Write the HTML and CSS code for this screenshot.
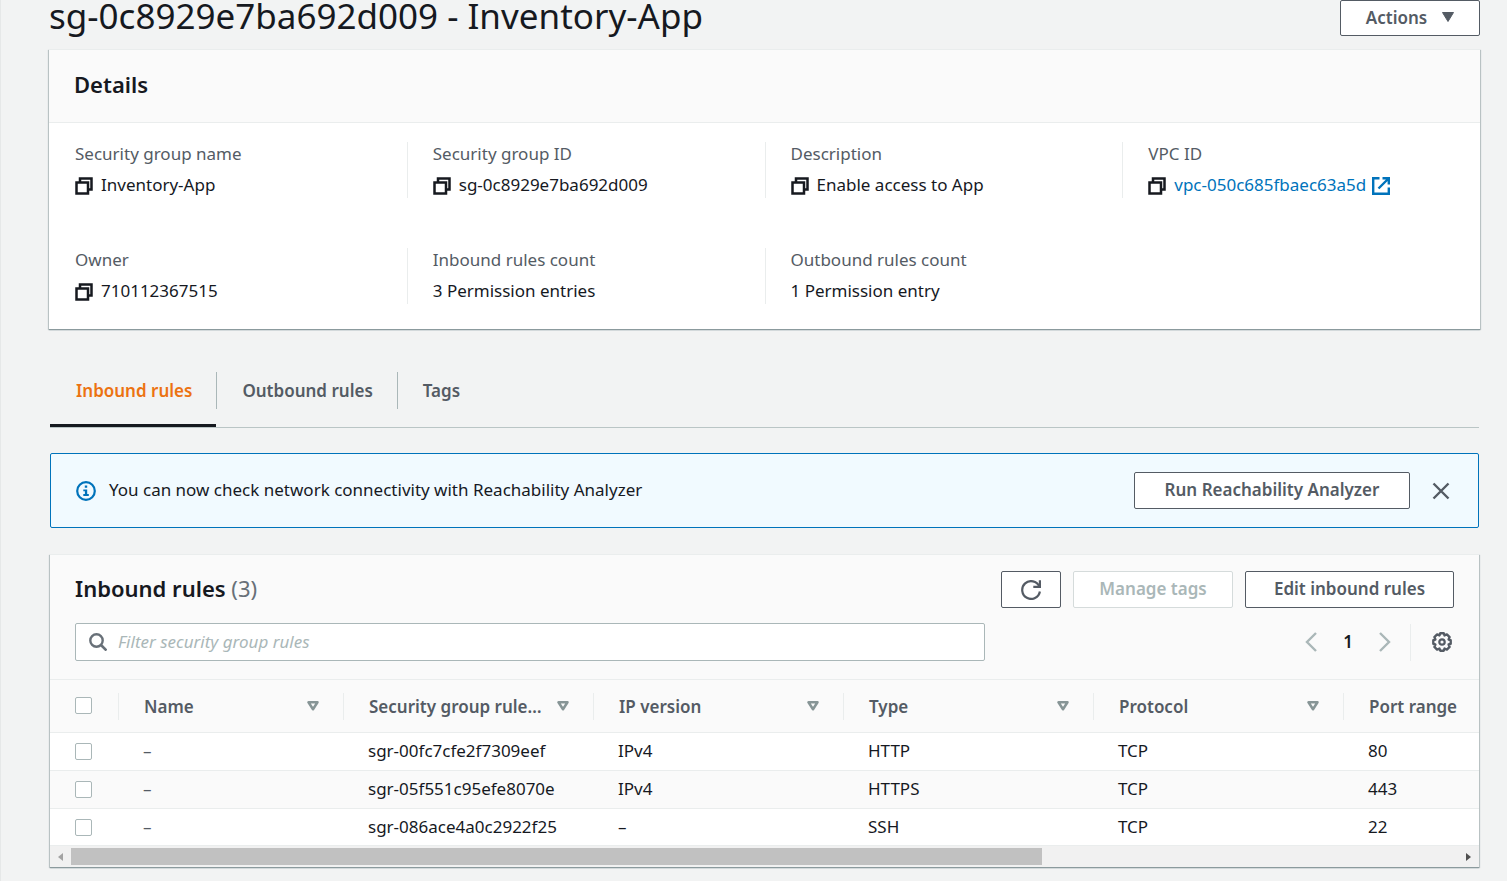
FILE: index.html
```
<!DOCTYPE html>
<html lang="en">
<head>
<meta charset="utf-8">
<title>sg-0c8929e7ba692d009 - Inventory-App</title>
<link rel="stylesheet" href="styles.css">
</head>
<body>
<svg class="defs" aria-hidden="true">
  <symbol id="copy" viewBox="0 0 18 18"><path d="M5 5V1.500H16.500V12.500H13M1.500 5.500H13V16.500H1.500Z" fill="none" stroke="currentColor" stroke-width="2.500"/></symbol>
  <symbol id="sort" viewBox="0 0 12 10"><path d="M1.500 1.300H10.500L6 8.300Z" fill="none" stroke="currentColor" stroke-width="2.500" stroke-linejoin="round"/></symbol>
</svg>
<main class="page">
  <header class="page-head">
    <h1>sg-0c8929e7ba692d009 - Inventory-App</h1>
    <button class="btn btn-actions" type="button">Actions <svg class="caret" viewBox="0 0 12 10"><path d="M.5.500H11.500L6 9.500Z" fill="currentColor" stroke="currentColor" stroke-linejoin="round"/></svg></button>
  </header>

  <section class="card">
    <div class="card-head"><h2>Details</h2></div>
    <dl class="details">
      <div class="detail"><dt>Security group name</dt><dd><svg class="icon"><use href="#copy"/></svg>Inventory-App</dd></div>
      <div class="detail"><dt>Security group ID</dt><dd><svg class="icon"><use href="#copy"/></svg>sg-0c8929e7ba692d009</dd></div>
      <div class="detail"><dt>Description</dt><dd><svg class="icon"><use href="#copy"/></svg>Enable access to App</dd></div>
      <div class="detail"><dt>VPC ID</dt><dd><svg class="icon"><use href="#copy"/></svg><a class="link" href="#vpc">vpc-050c685fbaec63a5d<svg class="icon icon-ext" viewBox="0 0 18 18"><path d="M7.500 1.200H1.200V16.800H16.800V10.500M10.500 1.200H16.800V7.500M16.500 1.500L6.500 11.500" fill="none" stroke="currentColor" stroke-width="2.400"/></svg></a></dd></div>
      <div class="detail"><dt>Owner</dt><dd><svg class="icon"><use href="#copy"/></svg>710112367515</dd></div>
      <div class="detail"><dt>Inbound rules count</dt><dd>3 Permission entries</dd></div>
      <div class="detail"><dt>Outbound rules count</dt><dd>1 Permission entry</dd></div>
    </dl>
  </section>

  <div class="lower">
    <div class="tabs" role="tablist">
      <button class="tab tab-active" type="button" role="tab" aria-selected="true"><span>Inbound rules</span></button>
      <button class="tab" type="button" role="tab"><span>Outbound rules</span></button>
      <button class="tab" type="button" role="tab"><span>Tags</span></button>
    </div>

    <div class="notice" role="status">
      <svg class="icon-lg info" viewBox="0 0 20 20"><circle cx="10" cy="10" r="8.800" fill="none" stroke="currentColor" stroke-width="2.200"/><path d="M8.800 4.500H11.200V6.800H8.800ZM7.300 8.400H11.200V13H12.800V15H7.300V13H8.900V10.300H7.300Z" fill="currentColor"/></svg>
      <p>You can now check network connectivity with Reachability Analyzer</p>
      <button class="btn btn-run" type="button">Run Reachability Analyzer</button>
      <button class="plain" type="button" aria-label="Dismiss"><svg class="icon" viewBox="0 0 18 18"><path d="M1.500 1.500L16.500 16.500M16.500 1.500L1.500 16.500" fill="none" stroke="currentColor" stroke-width="2.400"/></svg></button>
    </div>

    <section class="card rules">
      <div class="rules-head">
        <div class="rules-title">
          <h2>Inbound rules <span class="count">(3)</span></h2>
          <button class="btn btn-refresh" type="button" aria-label="Refresh"><svg class="icon-lg" viewBox="0 0 20 20"><path d="M18.300 6.500A8.900 8.900 0 1 0 18.900 11.500" fill="none" stroke="currentColor" stroke-width="2.200"/><path d="M18.900 .3V6.800H12.300" fill="none" stroke="currentColor" stroke-width="2.200"/></svg></button>
          <button class="btn btn-tags" type="button" disabled>Manage tags</button>
          <button class="btn btn-edit" type="button">Edit inbound rules</button>
        </div>
        <div class="rules-tools">
          <label class="search"><svg class="icon" viewBox="0 0 18 18"><circle cx="7.500" cy="7.500" r="6.200" fill="none" stroke="currentColor" stroke-width="2.400"/><path d="M12 12L17.500 17.500" stroke="currentColor" stroke-width="2.600"/></svg><input type="text" placeholder="Filter security group rules" aria-label="Filter security group rules"></label>
          <nav class="pager" aria-label="Pages">
            <button class="plain arrow" type="button" aria-label="Previous page"><svg class="chev" viewBox="0 0 12 20"><path d="M11 1L2 10L11 19" fill="none" stroke="currentColor" stroke-width="2.400"/></svg></button>
            <button class="plain current" type="button">1</button>
            <button class="plain arrow" type="button" aria-label="Next page"><svg class="chev" viewBox="0 0 12 20"><path d="M1 1L10 10L1 19" fill="none" stroke="currentColor" stroke-width="2.400"/></svg></button>
          </nav>
          <button class="plain gear" type="button" aria-label="Preferences"><svg class="icon-lg" viewBox="0 0 20 20"><path d="M8.200 1.300H11.800L12.500 3.400L14.900 2.400L17.600 5.100L16.600 7.500L18.700 8.200V11.800L16.600 12.500L17.600 14.900L14.900 17.600L12.500 16.600L11.800 18.700H8.200L7.500 16.600L5.100 17.600L2.400 14.900L3.400 12.500L1.300 11.800V8.200L3.400 7.500L2.400 5.100L5.100 2.400L7.500 3.400Z" fill="none" stroke="currentColor" stroke-width="2.400" stroke-linejoin="round"/><circle cx="10" cy="10" r="2.700" fill="none" stroke="currentColor" stroke-width="2.200"/></svg></button>
        </div>
      </div>
      <div class="table-wrap">
        <table>
          <colgroup><col class="c-check"><col class="c-name"><col class="c-wide"><col class="c-wide"><col class="c-wide"><col class="c-wide"><col class="c-wide"></colgroup>
          <thead><tr>
            <th><input type="checkbox" aria-label="Select all rules"></th>
            <th><div class="th"><span>Name</span><svg class="sort"><use href="#sort"/></svg></div></th>
            <th><div class="th"><span>Security group rule…</span><svg class="sort"><use href="#sort"/></svg></div></th>
            <th><div class="th"><span>IP version</span><svg class="sort"><use href="#sort"/></svg></div></th>
            <th><div class="th"><span>Type</span><svg class="sort"><use href="#sort"/></svg></div></th>
            <th><div class="th"><span>Protocol</span><svg class="sort"><use href="#sort"/></svg></div></th>
            <th><div class="th"><span>Port range</span></div></th>
          </tr></thead>
          <tbody>
            <tr><td><input type="checkbox" aria-label="Select sgr-00fc7cfe2f7309eef"></td><td>–</td><td>sgr-00fc7cfe2f7309eef</td><td>IPv4</td><td>HTTP</td><td>TCP</td><td>80</td></tr>
            <tr><td><input type="checkbox" aria-label="Select sgr-05f551c95efe8070e"></td><td>–</td><td>sgr-05f551c95efe8070e</td><td>IPv4</td><td>HTTPS</td><td>TCP</td><td>443</td></tr>
            <tr><td><input type="checkbox" aria-label="Select sgr-086ace4a0c2922f25"></td><td>–</td><td>sgr-086ace4a0c2922f25</td><td>–</td><td>SSH</td><td>TCP</td><td>22</td></tr>
          </tbody>
        </table>
      </div>
      <div class="scrollbar" aria-hidden="true">
        <svg class="sb-arrow" viewBox="0 0 20 20"><path d="M13 6V14L8 10Z" fill="#a3a3a3"/></svg>
        <div class="sb-track"><div class="sb-thumb"></div></div>
        <svg class="sb-arrow" viewBox="0 0 20 20"><path d="M7 6V14L12 10Z" fill="#505050"/></svg>
      </div>
    </section>
  </div>
</main>
</body>
</html>
```
FILE: styles.css
```
* { box-sizing: border-box; }
body {
  margin: 0;
  background: #f2f3f3;
  color: #16191f;
  font: 17px/23px "Noto Sans", "Open Sans", sans-serif;
}
h1, h2, p, dl, dd { margin: 0; }
button, input { font: inherit; color: inherit; }
svg { display: block; flex: none; }
.defs { position: absolute; width: 0; height: 0; }
.page {
  min-height: 100vh;
  padding: 0 27px 13px 48px;
  border-left: 1px solid #e6e8e8;
}
.page-head {
  display: flex;
  justify-content: space-between;
  align-items: flex-start;
  padding-bottom: 13px;
}
h1 { font-size: 35px; line-height: 32px; font-weight: 400; }
h2 { font-size: 22px; line-height: 28px; font-weight: 600; }
.btn {
  display: flex;
  align-items: center;
  justify-content: center;
  gap: 15px;
  height: 37px;
  padding: 0 10px 2px;
  border: 1px solid #545b64;
  border-radius: 2px;
  background: #fff;
  color: #545b64;
  font-weight: 600;
  white-space: nowrap;
}
.btn:disabled { border-color: #d5dbdb; color: #aab7b8; }
.btn-actions { min-width: 140px; height: 36px; }
.btn-run { min-width: 276px; }
.btn-refresh { min-width: 60px; padding-bottom: 0; }
.btn-tags { min-width: 160px; }
.btn-edit { min-width: 209px; }
.caret { width: 12px; height: 10px; }
.icon { width: 18px; height: 18px; }
.icon-lg { width: 20px; height: 20px; }
.card {
  background: #fff;
  border-top: 1px solid #eaeded;
  box-shadow: 0 1px 1px #8b9a9d, 1px 1px 1px #c3cacc, -1px 1px 1px #c3cacc;
}
.card-head { padding: 20px 25px 24px; background: #fafafa; border-bottom: 1px solid #eaeded; }
.details {
  display: grid;
  grid-template-columns: repeat(4, 1fr);
  row-gap: 50px;
  padding: 19px 0 25px;
}
.detail {
  display: flex;
  flex-direction: column;
  gap: 8px;
  padding: 0 25px 2px;
  border-left: 1px solid #eaeded;
}
.detail:nth-child(4n + 1) { border-left-color: transparent; }
.detail dt { color: #545b64; }
.detail dd { display: flex; align-items: center; gap: 8px; white-space: nowrap; }
.detail .icon { margin-top: 2px; }
.link { display: flex; align-items: center; gap: 6px; color: #0073bb; text-decoration: none; }
.lower { padding: 0 1px; }
.tabs {
  display: flex;
  margin-top: 36px;
  border-bottom: 1px solid #bac5c5;
}
.tab {
  padding: 7px 0 15px;
  border: 0;
  border-bottom: 3px solid transparent;
  background: none;
  color: #545b64;
  font-weight: 600;
}
.tab span { display: block; padding: 7px 24px 7px 25px; border-left: 1px solid #aab7b8; }
.tab:first-child span { border-color: transparent; }
.tab-active { color: #ec7211; border-bottom-color: #16191f; }
.notice {
  display: flex;
  align-items: center;
  margin: 25px 0 26px;
  padding: 18px 28px 18px 25px;
  border: 1px solid #0073bb;
  border-radius: 2px;
  background: #f1faff;
}
.notice p { flex: 1; padding: 0 0 2px 13px; }
.info { color: #0073bb; }
.plain { display: flex; padding: 0; border: 0; background: none; color: #545b64; }
.notice .plain { margin-left: 22px; }
.rules-head { padding: 16px 25px 18px; background: #fafafa; border-bottom: 1px solid #eaeded; }
.rules-title { display: flex; align-items: center; gap: 12px; }
.rules-title h2 { flex: 1; padding-bottom: 4px; }
.count { color: #687078; font-weight: 400; }
.rules-tools { display: flex; align-items: center; margin-top: 15px; }
.search {
  display: flex;
  align-items: center;
  flex: 0 1 910px;
  height: 38px;
  padding: 0 13px;
  gap: 11px;
  border: 1px solid #aab7b8;
  border-radius: 2px;
  background: #fff;
  color: #687078;
}
.search input { flex: 1; min-width: 0; padding: 0 0 2px; border: 0; outline: 0; background: none; }
.search input::placeholder { color: #aab7b8; font-style: italic; opacity: 1; }
.pager { display: flex; align-items: center; gap: 26px; margin-left: auto; padding-right: 19px; }
.arrow { color: #aab7b8; }
.chev { width: 12px; height: 20px; }
.current { padding-bottom: 2px; color: #16191f; font-weight: 600; }
.gear { align-items: center; height: 37px; padding: 0 2px 0 21px; border-left: 1px solid #eaeded; }
.table-wrap { overflow: hidden; }
table { width: 1543px; table-layout: fixed; border-collapse: separate; border-spacing: 0; }
.c-check { width: 68px; }
.c-name { width: 225px; }
.c-wide { width: 250px; }
th { height: 53px; padding: 0; background: #fafafa; border-bottom: 1px solid #eaeded; color: #545b64; font-weight: 600; text-align: left; }
.th { display: flex; align-items: center; justify-content: space-between; gap: 10px; height: 27px; padding: 0 24px 0 25px; border-left: 1px solid #eaeded; }
.th span { white-space: nowrap; }
.sort { width: 12px; height: 10px; color: #879596; }
td { height: 38px; padding: 0 25px 2px; border-bottom: 1px solid #eaeded; }
td:nth-child(2) { color: #545b64; }
tbody tr:nth-child(even) { background: #fafafa; }
tbody tr:last-child td { height: 37px; }
td:first-child { padding: 0 25px; }
th:first-child { padding: 0 25px 2px; }
input[type="checkbox"] {
  display: block;
  appearance: none;
  width: 17px;
  height: 17px;
  margin: 0;
  border: 1px solid #aab7b8;
  border-radius: 2px;
  background: #fff;
}
.scrollbar { display: flex; align-items: center; height: 21px; background: #f1f1f1; }
.sb-arrow { width: 20px; height: 20px; }
.sb-track { flex: 1; padding: 0 1px; }
.sb-thumb { width: 70%; height: 17px; background: #c1c1c1; }
```
